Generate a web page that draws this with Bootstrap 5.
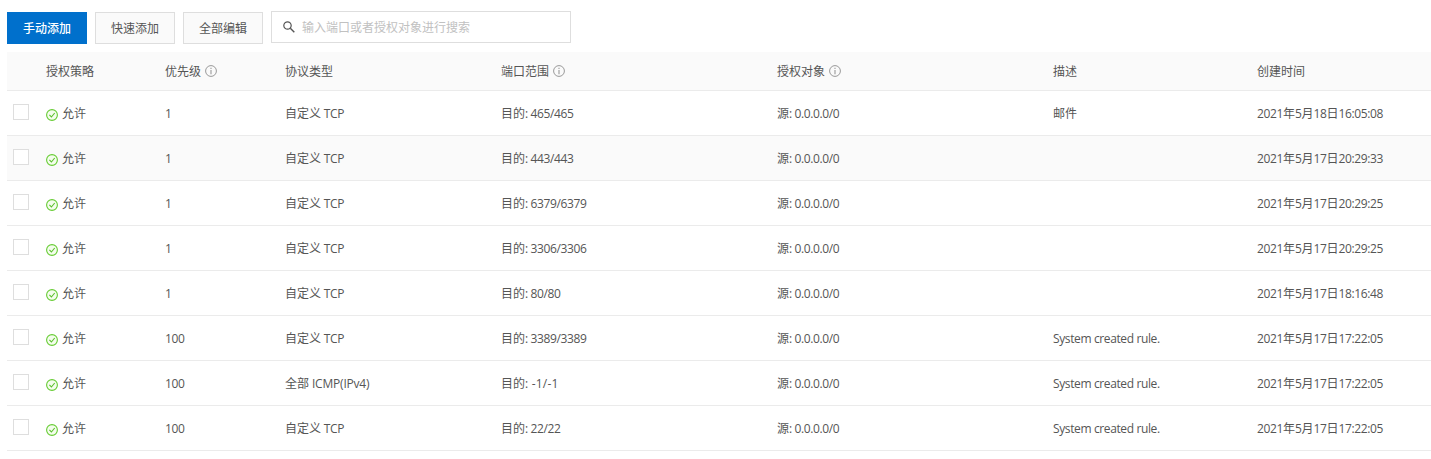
<!DOCTYPE html>
<html lang="zh-CN">
<head>
<meta charset="utf-8">
<meta name="viewport" content="width=device-width, initial-scale=1">
<title>安全组规则</title>
<link href="https://cdn.jsdelivr.net/npm/bootstrap@5.3.0/dist/css/bootstrap.min.css" rel="stylesheet">
<style>
  body { font: 12px/18px "Open Sans", "Noto Sans CJK SC", sans-serif; color: #555; overflow: hidden; }
  .rules-page { padding: 11px 0 0 7px; }
  .toolbar { height: 41px; }
  .toolbar .btn { --bs-btn-font-size: 12px; --bs-btn-padding-x: 0; --bs-btn-padding-y: 0; --bs-btn-border-radius: 0; width: 80px; height: 32px; margin-top: 1px; padding-top: 1px; line-height: 29px; }
  .btn-plain { --bs-btn-color: #555; --bs-btn-bg: #fafafa; --bs-btn-border-color: #dedede; --bs-btn-hover-bg: #f2f2f2; --bs-btn-hover-border-color: #ccc; }
  .toolbar .btn-primary { --bs-btn-bg: #0070cc; --bs-btn-border-color: #0070cc; font-weight: 500; }
  .search-box { width: 300px; height: 32px; border: 1px solid #dedede; padding-left: 11px; }
  .search-box input { font-size: 12px; line-height: 18px; padding: 2px 0 0 7px; color: #555; }
  .search-box input::placeholder { color: #c1c1c1; opacity: 1; }
  .rules-table { --bs-table-color: #555; table-layout: fixed; width: 1424px; border-collapse: separate; border-spacing: 0; }
  .rules-table > :not(caption) > * > * { padding: 2px 0 0 8px; vertical-align: middle; white-space: nowrap; border-bottom: 1px solid #ebebeb; }
  .rules-table > thead > tr > th { height: 39px; font-weight: 400; background: #fafafa; }
  .rules-table > tbody > tr > td { height: 45px; }
  .rules-table > tbody > tr > td:first-child { padding-left: 6px; }
  .rules-table > tbody > tr.is-active > td { background: #fafafa; }
  .rules-table .form-check-input { width: 16px; height: 16px; margin: 0 0 5px; border: 1px solid #dedede; border-radius: 0; background-color: #fff; }
  .lat { letter-spacing: -.38px; }
  .lat-loose { letter-spacing: .2px; }
  .lat-wide { letter-spacing: -.2px; }
  .info-mark { width: 12px; height: 12px; margin: 0 0 2px 4px; }
  .allow-mark { width: 12px; height: 12px; margin: 2px 4px 0 0; }
</style>
</head>
<body>
<svg class="d-none">
  <symbol id="info" viewBox="0 0 12 12"><circle cx="6" cy="6" r="5.4" fill="none" stroke="#999" stroke-width="1"/><path d="M6 2.8v1.2M6 5v4.2" stroke="#999" stroke-width="1.1"/></symbol>
  <symbol id="allow" viewBox="0 0 12 12"><circle cx="6" cy="6" r="5.4" fill="#f4fded" stroke="#6c3" stroke-width="1.1"/><path d="M3.4 5.9l2 2.1 3.3-4" fill="none" stroke="#5cc02e" stroke-width="1.1"/></symbol>
</svg>
<main class="rules-page">
  <div class="toolbar d-flex align-items-start gap-2">
    <button type="button" class="btn btn-primary">手动添加</button>
    <button type="button" class="btn btn-plain">快速添加</button>
    <button type="button" class="btn btn-plain">全部编辑</button>
    <div class="search-box d-flex align-items-center bg-white">
      <svg width="12" height="12" viewBox="0 0 12 12" class="flex-shrink-0" fill="none" stroke="#555"><circle cx="4.5" cy="4.5" r="3.7" stroke-width="1.2"/><path d="M7.3 7.3l4 4" stroke-width="1.4"/></svg>
      <input type="text" class="form-control border-0 shadow-none rounded-0 bg-transparent" placeholder="输入端口或者授权对象进行搜索">
    </div>
  </div>
  <table class="table rules-table mb-0">
    <colgroup><col style="width:31px"><col style="width:119px"><col style="width:120px"><col style="width:216px"><col style="width:276px"><col style="width:276px"><col style="width:204px"><col style="width:182px"></colgroup>
    <thead>
      <tr>
        <th></th>
        <th>授权策略</th>
        <th><div class="d-flex align-items-center">优先级<svg class="info-mark"><use href="#info"/></svg></div></th>
        <th>协议类型</th>
        <th><div class="d-flex align-items-center">端口范围<svg class="info-mark"><use href="#info"/></svg></div></th>
        <th><div class="d-flex align-items-center">授权对象<svg class="info-mark"><use href="#info"/></svg></div></th>
        <th>描述</th>
        <th>创建时间</th>
      </tr>
    </thead>
    <tbody id="rules"></tbody>
  </table>
</main>
<script src="https://cdn.jsdelivr.net/npm/bootstrap@5.3.0/dist/js/bootstrap.bundle.min.js"></script>
<script>
  // priority, protocol, port range, description, created at
  const rules = [
    ['1', '自定义 TCP', '465/465', '邮件', '2021年5月18日16:05:08'],
    ['1', '自定义 TCP', '443/443', '', '2021年5月17日20:29:33'],
    ['1', '自定义 TCP', '6379/6379', '', '2021年5月17日20:29:25'],
    ['1', '自定义 TCP', '3306/3306', '', '2021年5月17日20:29:25'],
    ['1', '自定义 TCP', '80/80', '', '2021年5月17日18:16:48'],
    ['100', '自定义 TCP', '3389/3389', 'System created rule.', '2021年5月17日17:22:05'],
    ['100', '全部 ICMP(IPv4)', '-1/-1', 'System created rule.', '2021年5月17日17:22:05'],
    ['100', '自定义 TCP', '22/22', 'System created rule.', '2021年5月17日17:22:05']
  ];
  const spacing = s => s.includes('-1') ? 'lat-loose' : s.includes('ICMP') ? 'lat-wide' : 'lat';
  const cell = t => '<td>' + t.replace(/[\x20-\x7e]+/g, s => `<span class="${spacing(s)}">${s}</span>`) + '</td>';
  document.getElementById('rules').innerHTML = rules.map((r, i) =>
    `<tr class="${i === 1 ? 'is-active' : ''}">
      <td><input type="checkbox" class="form-check-input d-block"></td>
      <td><div class="d-flex align-items-center"><svg class="allow-mark"><use href="#allow"/></svg>允许</div></td>
      ${cell(r[0])}${cell(r[1])}${cell('目的: ' + r[2])}${cell('源: 0.0.0.0/0')}${cell(r[3])}${cell(r[4])}
    </tr>`).join('');
</script>
</body>
</html>
